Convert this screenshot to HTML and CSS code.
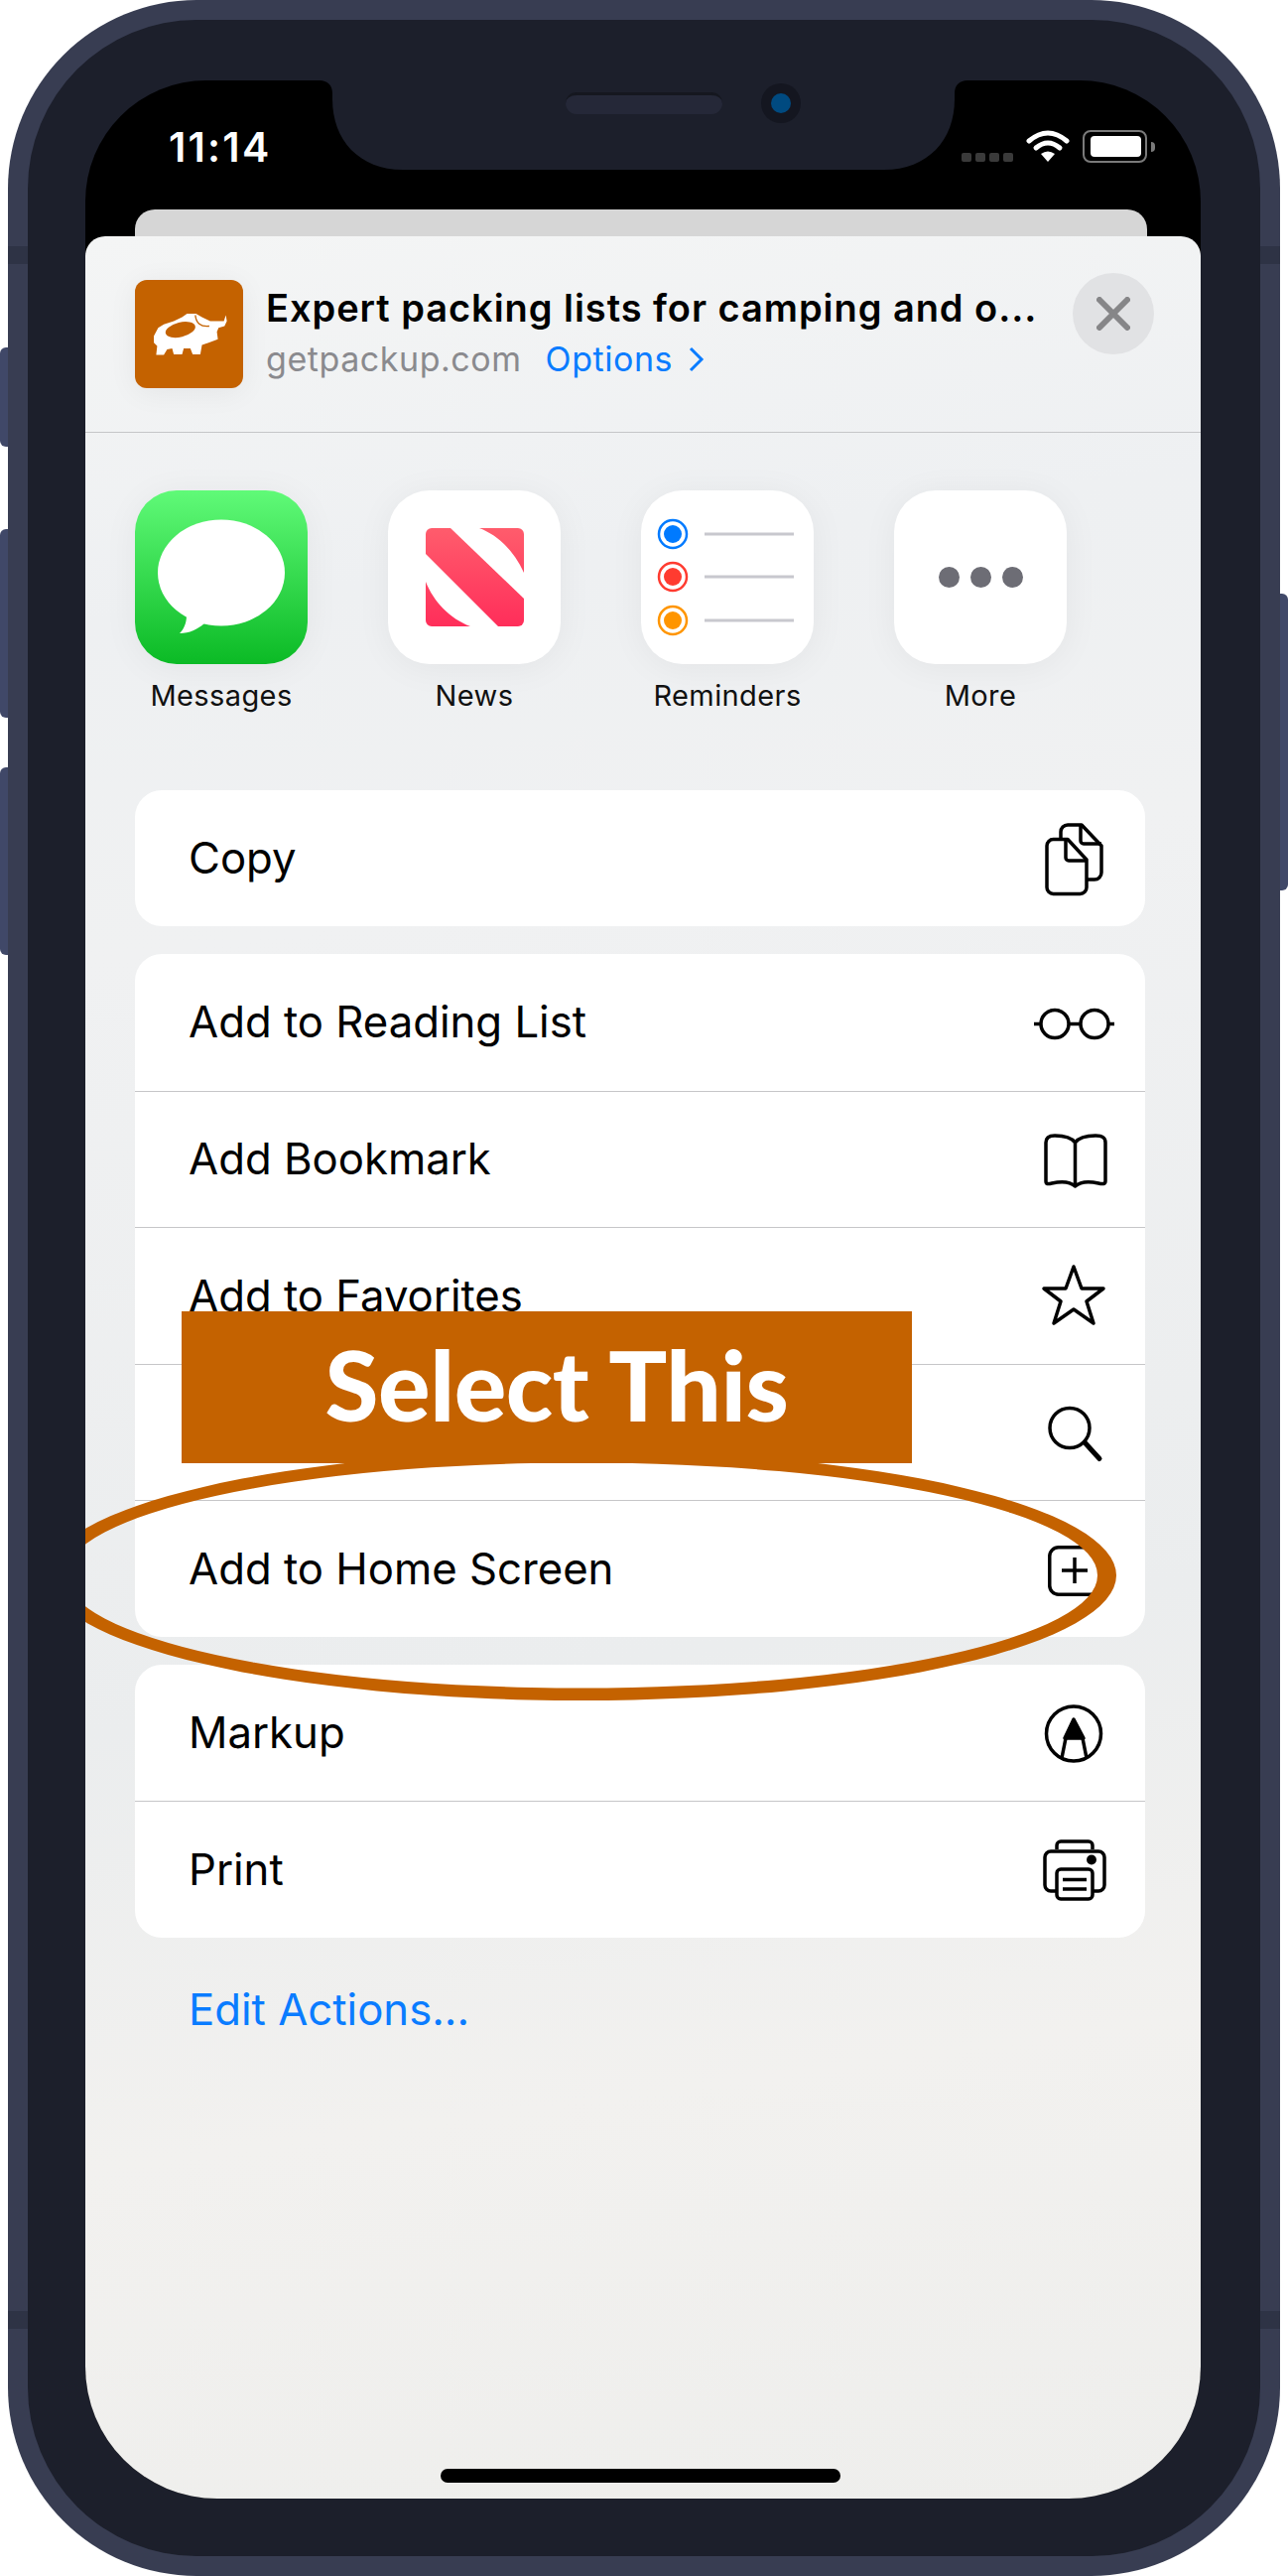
FILE: index.html
```html
<!DOCTYPE html>
<html lang="en">
<head>
    <meta charset="UTF-8">
    <meta name="viewport" content="width=device-width, initial-scale=1.0">
    <title>Add to Home Screen</title>
    <link rel="stylesheet" href="styles.css">
</head>
<body>
    <div class="device">
        <span class="side-btn btn-1"></span>
        <span class="side-btn btn-2"></span>
        <span class="side-btn btn-3"></span>
        <span class="side-btn btn-4"></span>
        <span class="band band-tl"></span>
        <span class="band band-tr"></span>
        <span class="band band-bl"></span>
        <span class="band band-br"></span>

        <div class="bezel">
            <div class="screen">
                <svg class="notch" viewBox="0 0 653 90" width="653" height="90">
                    <path d="M0 0 C8 0 13 5 13 13 V19 C13 60 40 90 84 90 H569 C613 90 640 60 640 19 V13 C640 5 645 0 653 0 Z" fill="#1c1f2b"/>
                </svg>
                <div class="speaker"></div>
                <div class="camera"><span></span></div>

                <div class="status">
                    <span class="time">11:14</span>
                    <div class="status-icons">
                        <div class="signal"><i></i><i></i><i></i><i></i></div>
                        <svg class="wifi" viewBox="0 0 44 33" width="44" height="33">
                            <path d="M3 11 Q22 -5 41 11" fill="none" stroke="#fff" stroke-width="5" stroke-linecap="round"/>
                            <path d="M10 18 Q22 8 34 18" fill="none" stroke="#fff" stroke-width="5" stroke-linecap="round"/>
                            <path d="M15 24 Q22 19 29 24 L22 32 Z" fill="#fff"/>
                        </svg>
                        <div class="battery"><span></span></div>
                        <div class="battery-nub"></div>
                    </div>
                </div>

                <div class="back-card"></div>

                <div class="sheet">
                    <div class="sheet-head">
                        <div class="logo">
                            <svg viewBox="48 66 326 326" width="109" height="109">
                                <path fill="#fff" d="M105 235 L118 210 L135 200 L165 190 L190 178 L205 168 L232 168 L250 178 L275 190 L300 190 L316 190 L322 172 L325 190 L318 205 L300 210 L295 222 L298 245 L270 255 L250 262 L245 290 L222 290 L215 272 L195 272 L190 290 L165 290 L160 272 L145 275 L135 292 L112 292 L115 265 L105 255 Z"/>
                                <ellipse cx="185" cy="216" rx="46" ry="22" transform="rotate(-14 185 216)" fill="#c46200"/>
                                <path d="M230 172 C232 195 245 208 272 205" fill="none" stroke="#c46200" stroke-width="4"/>
                            </svg>
                        </div>
                        <div class="head-text">
                            <div class="head-title">Expert packing lists for camping and o...</div>
                            <div class="head-sub">
                                <span class="head-url">getpackup.com</span>
                                <span class="head-options">Options</span>
                                <svg viewBox="0 0 16 26" width="16" height="26"><path d="M2 2 L13 13 L2 24" fill="none" stroke="#0a7cff" stroke-width="3"/></svg>
                            </div>
                        </div>
                        <div class="close">
                            <svg viewBox="0 0 34 34" width="34" height="34"><path d="M3 3 L31 31 M31 3 L3 31" stroke="#868688" stroke-width="6" stroke-linecap="round"/></svg>
                        </div>
                    </div>

                    <div class="apps">
                        <div class="app">
                            <div class="app-icon app-messages">
                                <svg viewBox="0 0 174 175" width="174" height="175">
                                    <ellipse cx="87" cy="83" rx="64" ry="53.5" fill="#fff"/>
                                    <path d="M52 126 C52 134 49 140 45 144 C55 144 63 140 70 134 Z" fill="#fff"/>
                                </svg>
                            </div>
                            <span class="app-label">Messages</span>
                        </div>
                        <div class="app">
                            <div class="app-icon">
                                <svg viewBox="0 0 99 99" width="99" height="99">
                                    <defs>
                                        <linearGradient id="newsGrad" gradientUnits="userSpaceOnUse" x1="0" y1="0" x2="0" y2="99">
                                            <stop offset="0" stop-color="#ff5c6c"/>
                                            <stop offset="1" stop-color="#ff2e5a"/>
                                        </linearGradient>
                                    </defs>
                                    <path fill="url(#newsGrad)" d="M25 0 L99 71 V93 a6 6 0 0 1 -6 6 H73 L0 26 V6 a6 6 0 0 1 6 -6 Z"/>
                                    <path fill="url(#newsGrad)" d="M54 0 H93 a6 6 0 0 1 6 6 V45 C90 25 75 8 54 0 Z"/>
                                    <path fill="url(#newsGrad)" d="M0 54 C8 74 24 91 45 99 H6 a6 6 0 0 1 -6 -6 Z"/>
                                </svg>
                            </div>
                            <span class="app-label">News</span>
                        </div>
                        <div class="app">
                            <div class="app-icon">
                                <svg viewBox="0 0 174 175" width="174" height="175">
                                    <circle cx="32" cy="44" r="14" fill="none" stroke="#007aff" stroke-width="2.5"/>
                                    <circle cx="32" cy="44" r="9" fill="#007aff"/>
                                    <circle cx="32" cy="87" r="14" fill="none" stroke="#ff3b30" stroke-width="2.5"/>
                                    <circle cx="32" cy="87" r="9" fill="#ff3b30"/>
                                    <circle cx="32" cy="131" r="14" fill="none" stroke="#ff9500" stroke-width="2.5"/>
                                    <circle cx="32" cy="131" r="9" fill="#ff9500"/>
                                    <path d="M64 44 H154 M64 87 H154 M64 131 H154" stroke="#c8c8ce" stroke-width="3"/>
                                </svg>
                            </div>
                            <span class="app-label">Reminders</span>
                        </div>
                        <div class="app">
                            <div class="app-icon app-more"><i></i><i></i><i></i></div>
                            <span class="app-label">More</span>
                        </div>
                    </div>

                    <div class="card card-copy">
                        <div class="row">
                            <span>Copy</span>
                            <svg class="row-icon" viewBox="0 0 90 80">
                                <path d="M31 20 V13 a7 7 0 0 1 7 -7 H52 L72 27 V54 a7 7 0 0 1 -7 7 H58"/>
                                <path d="M51 6 V22 a3 3 0 0 0 3 3 H72"/>
                                <path d="M24 20.5 H38 L57 41 V69 a6.5 6.5 0 0 1 -6.5 6.5 H23.5 a6.5 6.5 0 0 1 -6.5 -6.5 V27 a6.5 6.5 0 0 1 6.5 -6.5 Z"/>
                                <path d="M36 21 V39 a3 3 0 0 0 3 3 H57"/>
                            </svg>
                        </div>
                    </div>

                    <div class="card">
                        <div class="row">
                            <span>Add to Reading List</span>
                            <svg class="row-icon" viewBox="0 0 90 80">
                                <circle cx="25" cy="41.5" r="14"/>
                                <circle cx="65" cy="41.5" r="14"/>
                                <path d="M4 41.5 H11 M39 41.5 H51 M79 41.5 H85"/>
                            </svg>
                        </div>
                        <div class="row">
                            <span>Add Bookmark</span>
                            <svg class="row-icon" viewBox="0 0 90 80">
                                <path d="M45.5 23 C41 17 33 16 25 16 C19 16 16 18 16 23 V62 C16 65 18 65 22 64 C31 62 40 62 45.5 67 C51 62 60 62 69 64 C73 65 76 65 76 62 V23 C76 18 73 16 66 16 C58 16 50 17 45.5 23 Z M45.5 23 V67"/>
                            </svg>
                        </div>
                        <div class="row">
                            <span>Add to Favorites</span>
                            <svg class="row-icon" viewBox="0 0 90 80">
                                <path d="M44 11 L52 33 L74 33 L57 46 L64 68 L44 54 L24 68 L31 46 L14 33 L36 33 Z"/>
                            </svg>
                        </div>
                        <div class="row">
                            <span></span>
                            <svg class="row-icon" viewBox="0 0 90 80">
                                <circle cx="40" cy="35.5" r="20"/>
                                <path d="M55 50 L70 66.5" stroke-width="5" stroke-linecap="round"/>
                            </svg>
                        </div>
                        <div class="row">
                            <span>Add to Home Screen</span>
                            <svg class="row-icon" viewBox="0 0 90 80">
                                <rect x="19.75" y="18.75" width="50.5" height="47.5" rx="9"/>
                                <path d="M45 29 V55 M32 42 H58"/>
                            </svg>
                        </div>
                    </div>

                    <div class="card">
                        <div class="row">
                            <span>Markup</span>
                            <svg class="row-icon" viewBox="0 0 90 80">
                                <circle cx="44" cy="41.5" r="27.5"/>
                                <path d="M44 27 L54 46 H35 Z" class="solid"/>
                                <path d="M36 46 L32 66 M53 46 L57 66"/>
                            </svg>
                        </div>
                        <div class="row">
                            <span>Print</span>
                            <svg class="row-icon" viewBox="0 0 90 80">
                                <path d="M27 20 V16 a4 4 0 0 1 4 -4 H59 a4 4 0 0 1 4 4 V20"/>
                                <path d="M27 62 H21 a6 6 0 0 1 -6 -6 V28 a6 6 0 0 1 6 -6 H69 a6 6 0 0 1 6 6 V56 a6 6 0 0 1 -6 6 H63"/>
                                <rect x="27" y="40" width="36" height="30" rx="4"/>
                                <path d="M33 50.5 H57 M33 60 H57"/>
                                <circle cx="62" cy="30.5" r="3.2" class="solid"/>
                            </svg>
                        </div>
                    </div>

                    <div class="edit-actions">Edit Actions...</div>
                    <div class="home-bar"></div>
                </div>

                <!-- callout over the list -->
                <svg class="ring" viewBox="0 0 1078 252" width="1078" height="252">
                    <path fill="#c46200" fill-rule="evenodd" d="M0 126 A539 126 0 1 1 1078 126 A539 126 0 1 1 0 126 Z M19 126 A520 113.5 0 1 0 1059 126 A520 113.5 0 1 0 19 126 Z"/>
                </svg>
                <div class="callout">Select This</div>
            </div>
        </div>
    </div>
</body>
</html>
```

FILE: styles.css
```css
* {
    box-sizing: border-box;
}
body {
    margin: 0;
    width: 1298px;
    height: 2595px;
    overflow: hidden;
    background: #fff;
    font-family: Inter, "Liberation Sans", sans-serif;
}
.device {
    position: relative;
    width: 1282px;
    height: 2595px;
    margin-left: 8px;
    padding: 20px;
    background: #383d52;
    border-radius: 190px;
}
.side-btn {
    position: absolute;
    width: 8px;
    background: #404868;
}
.btn-1 {
    left: -8px;
    top: 350px;
    height: 100px;
    border-radius: 6px 0 0 6px;
}
.btn-2 {
    left: -8px;
    top: 533px;
    height: 190px;
    border-radius: 6px 0 0 6px;
}
.btn-3 {
    left: -8px;
    top: 773px;
    height: 189px;
    border-radius: 6px 0 0 6px;
}
.btn-4 {
    right: -8px;
    top: 598px;
    height: 299px;
    border-radius: 0 6px 6px 0;
}
.band {
    position: absolute;
    width: 20px;
    height: 18px;
    background: #2e3345;
}
.band-tl {
    left: 0;
    top: 248px;
}
.band-tr {
    right: 0;
    top: 248px;
}
.band-bl {
    left: 0;
    top: 2328px;
}
.band-br {
    right: 0;
    top: 2328px;
}
.bezel {
    position: relative;
    height: 100%;
    padding: 61px 60px 58px 58px;
    background: #1c1f2b;
    border-radius: 170px;
}
.screen {
    position: relative;
    display: flex;
    flex-direction: column;
    height: 100%;
    overflow: hidden;
    background: #000;
    border-radius: 122px 122px 133px 133px;
}

/* notch */
.notch {
    position: absolute;
    left: 236px;
    top: 0;
}
.speaker {
    position: absolute;
    left: 484px;
    top: 12px;
    width: 158px;
    height: 22px;
    background: #252838;
    border-top: 3px solid #15171f;
    border-radius: 11px;
}
.camera {
    position: absolute;
    left: 681px;
    top: 3px;
    display: flex;
    align-items: center;
    justify-content: center;
    width: 40px;
    height: 40px;
    background: #141620;
    border-radius: 50%;
}
.camera span {
    width: 20px;
    height: 20px;
    background: #004a80;
    border-radius: 50%;
}

/* status bar */
.status {
    display: flex;
    justify-content: space-between;
    height: 130px;
    padding: 42px 46px 0 84px;
    flex-shrink: 0;
}
.time {
    color: #fff;
    font-size: 41px;
    font-weight: 600;
    letter-spacing: 2.2px;
    line-height: 50px;
}
.status-icons {
    display: flex;
    align-items: flex-start;
    margin-top: 8px;
}
.signal {
    display: flex;
    gap: 4px;
    margin-top: 23px;
    margin-right: 13px;
}
.signal i {
    width: 10px;
    height: 9px;
    background: #3a3a3a;
    border-radius: 2px;
}
.battery {
    width: 65px;
    height: 33px;
    margin-left: 13px;
    padding: 4px 4px 4px 6px;
    border: 2px solid #7a7a7a;
    border-radius: 8px;
}
.battery span {
    display: block;
    height: 100%;
    background: #fff;
    border-radius: 4px;
}
.battery-nub {
    width: 4px;
    height: 10px;
    margin: 12px 0 0 4px;
    background: #7a7a7a;
    border-radius: 0 4px 4px 0;
}
.back-card {
    height: 27px;
    margin: 0 54px 0 50px;
    background: #d6d6d6;
    border-radius: 20px 20px 0 0;
    flex-shrink: 0;
}

/* share sheet */
.sheet {
    display: flex;
    flex-direction: column;
    flex: 1;
    padding: 0 56px 0 50px;
    background: linear-gradient(172deg, #f4f5f5 0%, #eef0f2 16%, #f0f1f2 30%, #ebedee 62%, #f2f1ef 80%, #eeeeec 100%);
    border-radius: 20px 20px 0 0;
}
.sheet-head {
    display: flex;
    align-items: flex-start;
    height: 198px;
    margin: 0 -56px 0 -50px;
    padding: 37px 47px 0 50px;
    border-bottom: 1.5px solid #c5c6c8;
}
.logo {
    display: flex;
    width: 109px;
    height: 109px;
    margin-top: 7px;
    background: #c46200;
    border-radius: 12px;
    box-shadow: 0 4px 30px rgba(0, 0, 0, 0.06);
}
.head-text {
    flex: 1;
    margin: 13px 0 0 23px;
    white-space: nowrap;
}
.head-title {
    color: #000;
    font-size: 38px;
    font-weight: 600;
    letter-spacing: 0.95px;
    line-height: 44px;
}
.head-sub {
    display: flex;
    align-items: center;
    margin-top: 9px;
    font-size: 34px;
    letter-spacing: 0.55px;
    line-height: 42px;
}
.head-url {
    color: #8a8a8e;
}
.head-options {
    margin-left: 24px;
    color: #0a7cff;
}
.head-sub svg {
    margin-left: 16px;
}
.close {
    display: flex;
    align-items: center;
    justify-content: center;
    width: 82px;
    height: 82px;
    background: #e1e2e4;
    border-radius: 50%;
}
.apps {
    display: flex;
    gap: 81px;
    margin-top: 58px;
}
.app {
    display: flex;
    flex-direction: column;
    align-items: center;
    width: 174px;
}
.app-icon {
    display: flex;
    align-items: center;
    justify-content: center;
    width: 174px;
    height: 175px;
    background: #fff;
    border-radius: 42px;
    box-shadow: 0 4px 36px rgba(0, 0, 0, 0.05);
}
.app-messages {
    background: linear-gradient(180deg, #60fa78 0%, #0bba25 100%);
}
.app-more {
    gap: 11px;
}
.app-more i {
    width: 21px;
    height: 21px;
    background: #6d6d75;
    border-radius: 50%;
}
.app-label {
    margin-top: 14px;
    color: #111;
    font-size: 29px;
    letter-spacing: 0.4px;
    line-height: 36px;
    white-space: nowrap;
}
.card {
    margin-top: 28px;
    background: #fff;
    border-radius: 27px;
    overflow: hidden;
}
.card-copy {
    margin-top: 77px;
}
.row {
    display: flex;
    align-items: center;
    justify-content: space-between;
    height: 137.5px;
    padding: 0 26px 0 54px;
    color: #000;
    font-size: 43.7px;
    border-top: 1.5px solid #c6c6c8;
}
.row:first-child {
    border-top: 0;
}
.card-copy .row {
    height: 137px;
}
.row-icon {
    width: 90px;
    height: 80px;
    fill: none;
    stroke: #000;
    stroke-width: 3.5;
    stroke-linejoin: round;
}
.row-icon .solid {
    fill: #000;
}
.edit-actions {
    margin: 48px 0 0 54px;
    color: #0a7cff;
    font-size: 43.7px;
    line-height: 50px;
}
.home-bar {
    width: 403px;
    height: 14px;
    margin: auto 0 16px 308px;
    background: #000;
    border-radius: 7px;
}

/* callout */
.ring {
    position: absolute;
    left: -39px;
    top: 1380px;
}
.callout {
    position: absolute;
    left: 97px;
    top: 1240px;
    width: 736px;
    height: 153px;
    padding: 0 0 6px 20px;
    color: #fff;
    background: #c46200;
    font-family: Lato, sans-serif;
    font-size: 98px;
    font-weight: 900;
    letter-spacing: -0.4px;
    line-height: 147px;
    text-align: center;
}
```
